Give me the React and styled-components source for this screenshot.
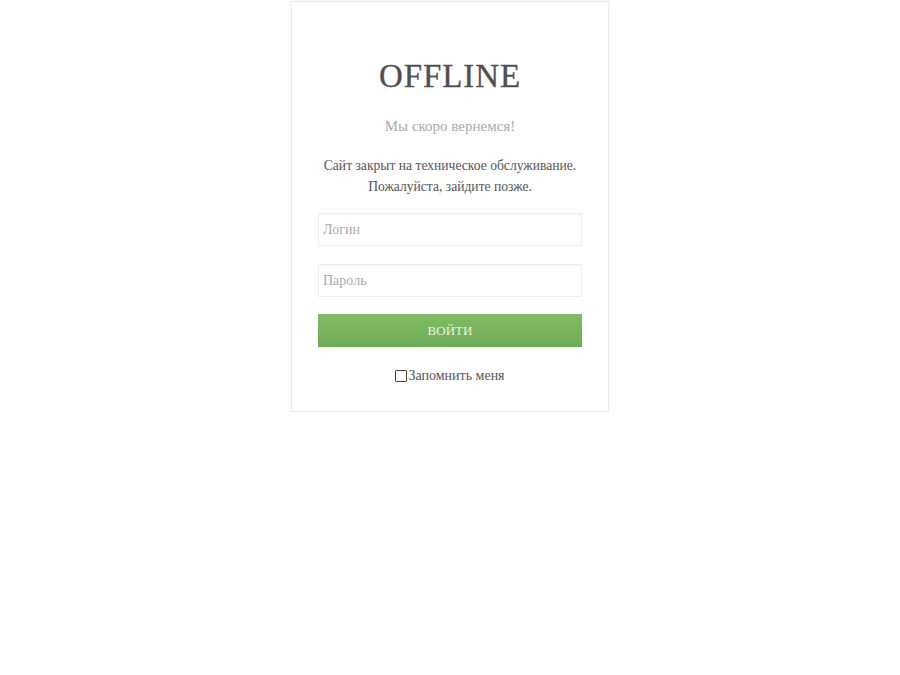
import React from 'react';
import styled, { createGlobalStyle } from 'styled-components';

const GlobalStyle = createGlobalStyle`
  html, body {
    margin: 0;
    padding: 0;
    background: #fff;
  }
  body {
    font-family: "Liberation Serif", "DejaVu Serif", serif;
    color: #555;
  }
`;

const Page = styled.div`
  display: flex;
  justify-content: center;
`;

const Card = styled.div`
  box-sizing: border-box;
  width: 318px;
  margin-top: 1px;
  padding: 54px 26px 27px;
  border: 1px solid #ebebeb;
  box-shadow: 0 0 3px rgba(0, 0, 0, 0.06);
  background: #fff;
  text-align: center;
`;

const Heading = styled.h1`
  margin: 0;
  font-family: "Liberation Serif", serif;
  font-weight: normal;
  font-size: 33px;
  line-height: 40px;
  color: #4f4f4f;
  letter-spacing: 0.9px;
  -webkit-text-stroke: 0.3px #4f4f4f;
`;

const Subtitle = styled.p`
  margin: 19px 0 0;
  font-size: 15px;
  line-height: 22px;
  color: #aaa;
`;

const Message = styled.p`
  margin: 18px 0 0;
  font-size: 13.6px;
  line-height: 21px;
  color: #555;
`;

const Form = styled.form`
  display: flex;
  flex-direction: column;
  gap: 18px;
  margin-top: 16px;
`;

const Field = styled.input`
  box-sizing: border-box;
  width: 100%;
  height: 33px;
  padding: 0 4px;
  border: 1px solid #eee;
  box-shadow: inset 0 1px 2px rgba(0, 0, 0, 0.03);
  font-family: "Liberation Serif", serif;
  font-size: 14px;
  color: #555;
  outline: none;

  &::placeholder {
    color: #aaa;
  }
`;

const Submit = styled.button`
  height: 33px;
  margin-top: -1px;
  border: none;
  background: linear-gradient(#80bc65, #6eab55);
  color: #eaf7dc;
  font-family: "Liberation Serif", serif;
  font-size: 13px;
  text-transform: uppercase;
  cursor: pointer;
`;

const Remember = styled.label`
  display: inline-flex;
  align-items: center;
  justify-content: center;
  gap: 1px;
  margin-top: 3px;
  font-size: 14px;
  color: #555;
`;

const Box = styled.span`
  box-sizing: border-box;
  width: 12px;
  height: 12px;
  border: 1.5px solid #444;
  border-radius: 1px;
`;

export default function App() {
  return (
    <>
      <GlobalStyle />
      <Page>
        <Card>
          <Heading>OFFLINE</Heading>
          <Subtitle>Мы скоро вернемся!</Subtitle>
          <Message>
            Сайт закрыт на техническое обслуживание.
            <br />
            Пожалуйста, зайдите позже.
          </Message>
          <Form onSubmit={e => e.preventDefault()}>
            <Field type="text" placeholder="Логин" />
            <Field type="password" placeholder="Пароль" />
            <Submit type="submit">Войти</Submit>
            <Remember>
              <Box />
              Запомнить меня
            </Remember>
          </Form>
        </Card>
      </Page>
    </>
  );
}
